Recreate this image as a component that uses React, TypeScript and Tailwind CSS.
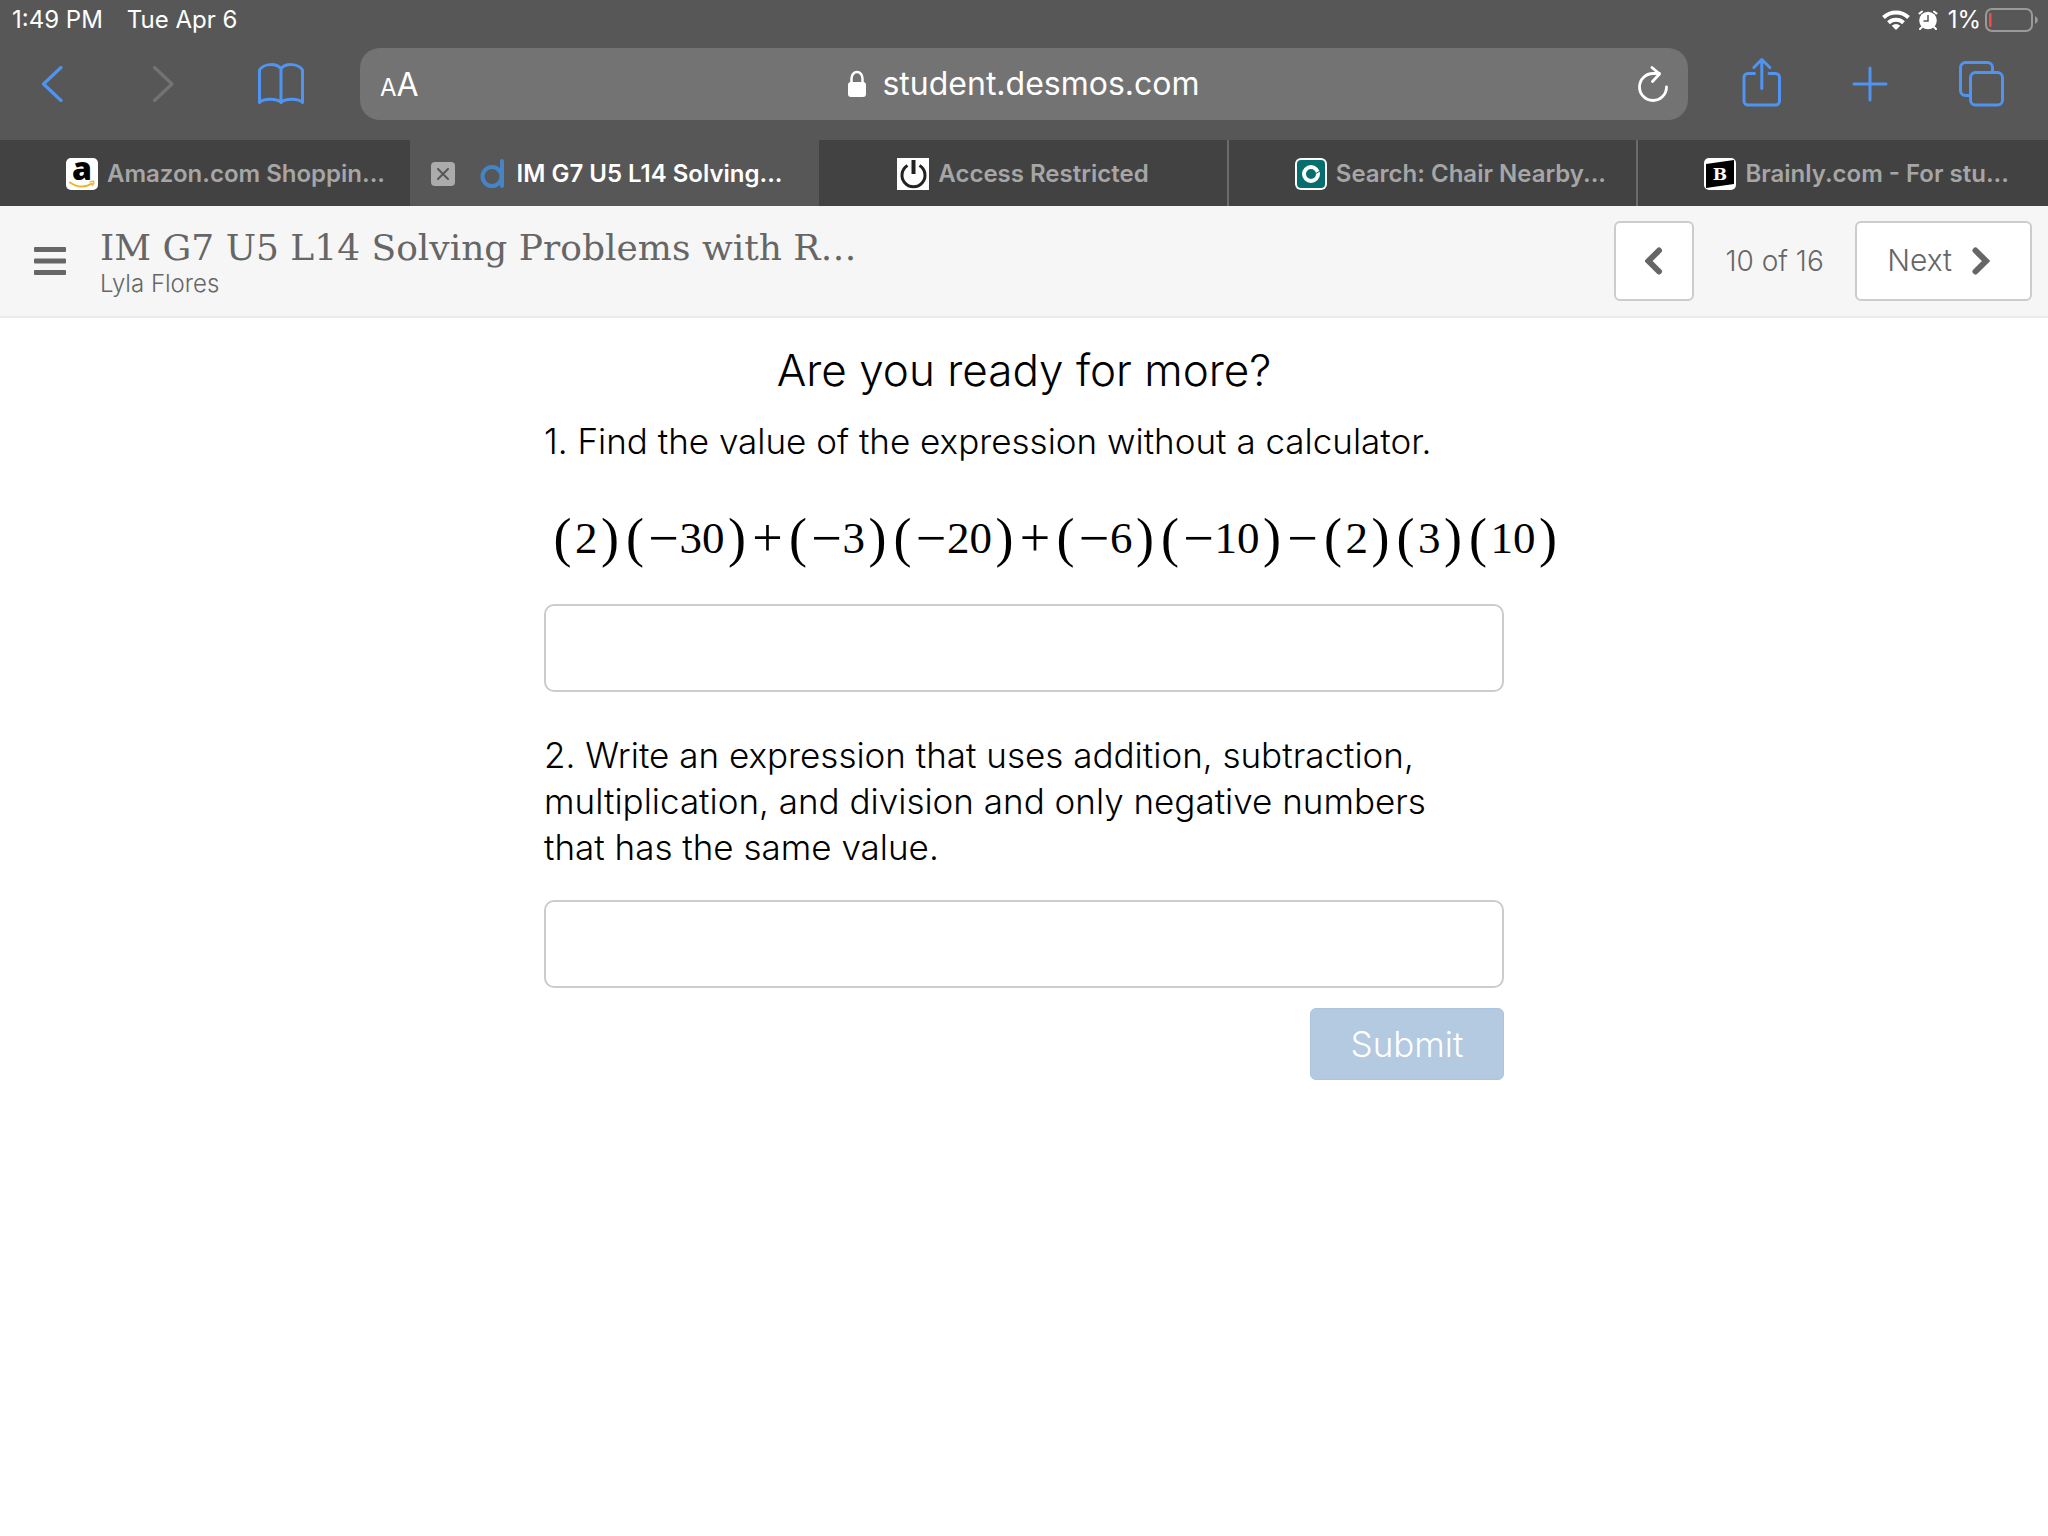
import { useState } from 'react';
import type { ReactNode } from 'react';

type Tab = {
  title: string;
  icon: ReactNode;
  active?: boolean;
  centered?: boolean;
};

const tabs: Tab[] = [
  { title: 'Amazon.com Shoppin...', icon: <AmazonIcon /> },
  { title: 'IM G7 U5 L14 Solving...', icon: <DesmosIcon />, active: true },
  { title: 'Access Restricted', icon: <PowerIcon />, centered: true },
  { title: 'Search: Chair Nearby...', icon: <SearchSiteIcon /> },
  { title: 'Brainly.com - For stu...', icon: <BrainlyIcon /> },
];

const expression = '(2)(−30)+(−3)(−20)+(−6)(−10)−(2)(3)(10)';

export default function App() {
  return (
    <div className="flex min-h-screen flex-col bg-white font-['Inter',sans-serif]">
      <StatusBar />
      <Toolbar />
      <TabBar />
      <ActivityHeader />
      <Activity />
    </div>
  );
}

function StatusBar() {
  return (
    <div className="flex h-10 items-center justify-between bg-[#575757] pr-[10px] pl-3 text-2xl text-white">
      <div className="flex gap-6">
        <span>1:49 PM</span>
        <span>Tue Apr 6</span>
      </div>
      <div className="flex items-center gap-2">
        <svg className="h-5 w-7" viewBox="0 0 28 20" fill="none" stroke="white" strokeWidth="4">
          <path d="M1.5 7.5a18 18 0 0 1 25 0" />
          <path d="M6.5 12.7a11 11 0 0 1 15 0" />
          <path d="M14 20l-4.2-4.2a6 6 0 0 1 8.4 0z" fill="white" stroke="none" />
        </svg>
        <svg className="h-5 w-5" viewBox="0 0 20 20">
          <circle cx="10" cy="10.5" r="8.8" fill="white" />
          <path d="M1.5 3.5L4 1.5M18.5 3.5L16 1.5M4 17l-2 2M16 17l2 2" stroke="white" strokeWidth="2" strokeLinecap="round" />
          <path d="M10 5v6H5.5" fill="none" stroke="#575757" strokeWidth="1.5" />
        </svg>
        <div className="flex items-center gap-1 pl-[2px]">
          <span>1%</span>
          <svg className="h-6 w-[53px]" viewBox="0 0 53 24">
            <rect x="1" y="1" width="46" height="22" rx="6" fill="none" stroke="#9a9a9a" strokeWidth="2" />
            <rect x="4" y="5" width="2.5" height="14" rx="1" fill="#f04d4d" />
            <path d="M50 8q3 1.5 3 4t-3 4z" fill="#9a9a9a" />
          </svg>
        </div>
      </div>
    </div>
  );
}

function Toolbar() {
  return (
    <div className="flex h-[100px] items-start bg-[#575757] pt-2 pr-11 pl-10 text-[#4f94f0]">
      <div className="flex h-[72px] w-80 shrink-0 items-center">
        <button aria-label="Back" className="w-[112px]">
          <svg className="h-9 w-6" viewBox="0 0 24 36" fill="none" stroke="currentColor" strokeWidth="3.2" strokeLinecap="round" strokeLinejoin="round">
            <path d="M21 1.5L3.5 18l17.5 16.5" />
          </svg>
        </button>
        <button aria-label="Forward" className="w-[105px] text-[#737373]" disabled>
          <svg className="h-9 w-6" viewBox="0 0 24 36" fill="none" stroke="currentColor" strokeWidth="3.2" strokeLinecap="round" strokeLinejoin="round">
            <path d="M2.5 1.5L20 18L2.5 34.5" />
          </svg>
        </button>
        <button aria-label="Bookmarks">
          <svg className="h-[42px] w-12" viewBox="0 0 48 42" fill="none" stroke="currentColor" strokeWidth="3" strokeLinejoin="round">
            <path d="M24 39.5C20 35.5 7 35 2.5 39.5V7C7 0 20 0 24 6C28 0 41 0 45.5 7V39.5C41 35 28 35.5 24 39.5zM24 6v33.5" />
          </svg>
        </button>
      </div>

      <div className="flex h-[72px] flex-1 items-center justify-between rounded-[20px] bg-[#737373] px-5 text-white">
        <button aria-label="Page settings" className="flex w-12 items-baseline pt-1 leading-none">
          <span className="text-2xl">A</span>
          <span className="text-[32px]">A</span>
        </button>
        <a href="#" className="flex items-center gap-4 text-[32px]">
          <svg className="h-7 w-[18px]" viewBox="0 0 18 28">
            <rect y="12" width="18" height="15" rx="3" fill="currentColor" />
            <path d="M3.5 13V8.5a5.5 6.5 0 0 1 11 0V13" fill="none" stroke="currentColor" strokeWidth="2.5" />
          </svg>
          student.desmos.com
        </a>
        <button aria-label="Reload" className="flex w-12 justify-end">
          <svg className="h-9 w-[30px]" viewBox="0 0 30 36" fill="none" stroke="currentColor" strokeWidth="2.8" strokeLinecap="round" strokeLinejoin="round">
            <path d="M28.5 21A13.5 13.5 0 1 1 15 7.5H21.5M14 1.5l7.5 6.5l-7 7.5" />
          </svg>
        </button>
      </div>

      <div className="ml-[54px] flex h-[72px] w-[262px] shrink-0 items-center justify-between">
        <button aria-label="Share" className="pb-1">
          <svg className="h-[50px] w-10" viewBox="0 0 40 50" fill="none" stroke="currentColor" strokeWidth="3" strokeLinecap="round" strokeLinejoin="round">
            <path d="M12.5 16.5H6a4 4 0 0 0-4 4V44a4 4 0 0 0 4 4H33.500a4 4 0 0 0 4-4V20.500a4 4 0 0 0-4-4H27" />
            <path d="M19.8 31.5V3M11.8 10.500L19.800 2.500L27.800 10.500" />
          </svg>
        </button>
        <button aria-label="New tab">
          <svg className="h-9 w-9" viewBox="0 0 36 36" stroke="currentColor" strokeWidth="3" strokeLinecap="round">
            <path d="M18 2v32M2 18h32" />
          </svg>
        </button>
        <button aria-label="All tabs">
          <svg className="h-[46px] w-[46px]" viewBox="0 0 46 46" fill="none" stroke="currentColor" strokeWidth="3">
            <path d="M12 34.5H7.5a5 5 0 0 1-5-5V6.5a5 5 0 0 1 5-5H29.5a5 5 0 0 1 5 5V12" />
            <rect x="12.5" y="11.5" width="32" height="32.5" rx="5" />
          </svg>
        </button>
      </div>
    </div>
  );
}

function TabBar() {
  return (
    <div className="grid h-[66px] grid-cols-5">
      {tabs.map((tab, i) => (
        <div
          key={tab.title}
          className={`relative flex items-center pt-[2px] text-2xl font-semibold whitespace-nowrap ${
            tab.active ? 'bg-[#575757] text-white' : 'bg-[#424242] text-[#a6a6a6]'
          } ${tab.centered ? 'justify-center' : 'pl-[66px]'} ${i === 2 || i === 3 ? 'border-r-2 border-[#6b6b6b]' : ''}`}
        >
          {tab.active && (
            <button aria-label="Close tab" className="absolute left-[21px] flex h-6 w-6 items-center justify-center rounded bg-[#ababab]">
              <svg className="h-3 w-3" viewBox="0 0 12 12" stroke="#575757" strokeWidth="2" strokeLinecap="round">
                <path d="M1 1l10 10M11 1L1 11" />
              </svg>
            </button>
          )}
          <a href="#" className="flex items-center gap-[9px]">
            {tab.icon}
            <span>{tab.title}</span>
          </a>
        </div>
      ))}
    </div>
  );
}

function AmazonIcon() {
  return (
    <svg className="h-8 w-8 overflow-visible" viewBox="0 0 32 32">
      <rect width="32" height="32" rx="5" fill="white" />
      <text x="16" y="22" textAnchor="middle" fontFamily="Open Sans, sans-serif" fontWeight="800" fontSize="32" fill="black">a</text>
      <path d="M4 24.5q11 7.5 22 1.2" fill="none" stroke="#eeb52b" strokeWidth="2" strokeLinecap="round" />
      <path d="M24 24q4-1.5 4 0t-1.5 3.5" fill="none" stroke="#eeb52b" strokeWidth="1.3" strokeLinecap="round" />
    </svg>
  );
}

function DesmosIcon() {
  return (
    <svg className="h-8 w-8" viewBox="0 0 32 32" fill="none" stroke="#4584c6" strokeWidth="4" strokeLinecap="round">
      <circle cx="16" cy="18.5" r="9.5" />
      <path d="M26 3v25" />
    </svg>
  );
}

function PowerIcon() {
  return (
    <svg className="h-8 w-8" viewBox="0 0 32 32" fill="none" stroke="#222222" strokeWidth="3">
      <rect width="32" height="32" fill="white" stroke="none" />
      <path d="M10.5 7.5A11.5 11.5 0 1 0 22.5 7.5" />
      <path d="M16.5 2v14" strokeWidth="4" />
    </svg>
  );
}

function SearchSiteIcon() {
  return (
    <svg className="h-8 w-8" viewBox="0 0 32 32">
      <rect width="32" height="32" rx="6" fill="white" />
      <rect x="2" y="2" width="28" height="28" rx="4" fill="#066f6d" />
      <circle cx="16" cy="16" r="7" fill="none" stroke="white" strokeWidth="4" />
      <path d="M20 16l5-3" stroke="#066f6d" strokeWidth="1" />
    </svg>
  );
}

function BrainlyIcon() {
  return (
    <svg className="h-8 w-8" viewBox="0 0 32 32">
      <rect width="32" height="32" rx="5" fill="white" />
      <path d="M2 6L30 2V26L2 30z" fill="black" />
      <text x="16" y="22" textAnchor="middle" fontFamily="DejaVu Serif, serif" fontWeight="700" fontSize="17" fill="white">B</text>
    </svg>
  );
}

function ActivityHeader() {
  return (
    <header className="flex h-28 items-center border-b-2 border-[#ebebeb] bg-[#f6f6f6] pr-4 pl-[34px] font-light text-[#666666]">
      <button aria-label="Menu" className="mr-[34px]">
        <svg className="h-7 w-8" viewBox="0 0 32 28" fill="#666666">
          <rect width="32" height="5" rx="1" />
          <rect y="11.5" width="32" height="5" rx="1" />
          <rect y="23" width="32" height="5" rx="1" />
        </svg>
      </button>
      <div className="flex-1 pt-[5px]">
        <h1 className="font-['DejaVu_Serif',serif] text-4xl">IM G7 U5 L14 Solving Problems with R…</h1>
        <div className="text-2xl">Lyla Flores</div>
      </div>
      <button aria-label="Previous" className="flex h-20 w-20 items-center justify-center rounded-md border-2 border-[#cccccc] bg-white">
        <svg className="h-7 w-[18px]" viewBox="0 0 18 28" fill="none" stroke="#666666" strokeWidth="6" strokeLinecap="round">
          <path d="M14 3.5L3.5 14L14 24.5" />
        </svg>
      </button>
      <span className="w-[161px] text-center text-[28px]">10 of 16</span>
      <button className="flex h-20 items-center gap-5 rounded-md border-2 border-[#cccccc] bg-white pr-10 pl-[30px] text-3xl">
        <span className="pb-[3px]">Next</span>
        <svg className="h-7 w-[18px]" viewBox="0 0 18 28" fill="none" stroke="#666666" strokeWidth="6" strokeLinecap="round">
          <path d="M3.5 3.5L14 14L3.5 24.5" />
        </svg>
      </button>
    </header>
  );
}

function Expression() {
  return (
    <div className="flex items-center pl-[6px] font-['Liberation_Serif',serif] text-[45px] leading-[60px] whitespace-nowrap">
      {expression.split('').map((ch, i) => {
        if (ch === '(' || ch === ')') {
          return <span key={i} className="w-[25px] shrink-0 text-center text-[54px]">{ch}</span>;
        }
        if (ch === '+' || ch === '−') {
          const unary = expression[i - 1] === '(';
          return <span key={i} className={`shrink-0 text-center text-[54px] ${unary ? 'w-8' : 'w-9'}`}>{ch}</span>;
        }
        return <span key={i} className="shrink-0">{ch}</span>;
      })}
    </div>
  );
}

function Activity() {
  const [first, setFirst] = useState('');
  const [second, setSecond] = useState('');

  return (
    <main className="mx-auto w-full max-w-[960px] pt-[22px] font-light text-black">
      <h2 className="text-center text-[44px] leading-[60px]">Are you ready for more?</h2>
      <label htmlFor="answer-1" className="mt-[18px] block text-[35px] leading-[46px]">
        1. Find the value of the expression without a calculator.
      </label>
      <div className="mt-11">
        <Expression />
      </div>
      <input
        id="answer-1"
        className="mt-9 block h-[88px] w-full rounded-[10px] border-2 border-[#cccccc] px-4 text-[35px]"
        value={first}
        onChange={(e) => setFirst(e.target.value)}
      />
      <label htmlFor="answer-2" className="mt-10 block text-[35px] leading-[46px]">
        2. Write an expression that uses addition, subtraction,
        <br />
        multiplication, and division and only negative numbers
        <br />
        that has the same value.
      </label>
      <input
        id="answer-2"
        className="mt-[30px] block h-[88px] w-full rounded-[10px] border-2 border-[#cccccc] px-4 text-[35px]"
        value={second}
        onChange={(e) => setSecond(e.target.value)}
      />
      <div className="mt-5 flex justify-end">
        <button className="h-[72px] w-[194px] rounded-md border border-[#adc4dd] bg-[#b3cae1] text-[35px] text-white">Submit</button>
      </div>
    </main>
  );
}
